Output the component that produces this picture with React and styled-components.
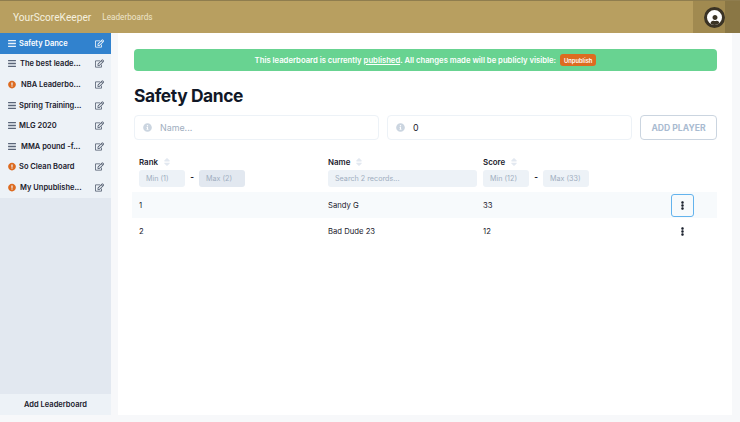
import React from 'react'
import styled, { createGlobalStyle } from 'styled-components'
import { FaBars, FaExclamationCircle, FaInfoCircle, FaEllipsisV, FaRegEdit, FaUser, FaSortUp, FaSortDown } from 'react-icons/fa'

const GlobalStyle = createGlobalStyle`
    html, body { margin: 0; padding: 0; height: 100%; }
    body { font-family: Inter, "Liberation Sans", sans-serif; color: #1a202c; background: #f7f8fa; }
    * { box-sizing: border-box; }
`
const Page = styled.div`
    width: 740px;
    height: 422px;
    display: flex;
    flex-direction: column;
    overflow: hidden;
`
const Header = styled.header`
    height: 33px;
    flex: none;
    display: flex;
    align-items: center;
    background: #b89f60;
    border-top: 1px solid #8f7d4e;
    padding-left: 13px;
`
const Brand = styled.span`
    font-family: Roboto, sans-serif;
    font-size: 10.2px;
    color: #f5f0df;
`
const NavLink = styled.span`
    font-family: Roboto, sans-serif;
    font-size: 8.2px;
    color: #eee6cd;
    margin-left: 11px;
`
const HeaderEnd = styled.div`
    margin-left: auto;
    height: 100%;
    display: flex;
`
const AvatarBox = styled.div`
    width: 32px;
    display: flex;
    align-items: center;
    justify-content: flex-end;
    background: #a18a50;
`
const Avatar = styled.div`
    width: 21px;
    height: 21px;
    border-radius: 50%;
    background: #fff;
    border: 3px solid #3a3325;
    display: flex;
    align-items: flex-end;
    justify-content: center;
    color: #3a3325;
    font-size: 10px;
    overflow: hidden;
`
const HeaderGutter = styled.div`
    width: 15px;
    background: #8a7745;
`
const Body = styled.div`
    flex: 1;
    display: flex;
    min-height: 0;
    padding-bottom: 7px;
`
const Sidebar = styled.aside`
    width: 111px;
    flex: none;
    display: flex;
    flex-direction: column;
    background: #e2e8f0;
`
const SideList = styled.div`
    flex: 1;
`
const SideItem = styled.div`
    height: 20.6px;
    display: flex;
    align-items: center;
    padding: 0 7px 0 8px;
    background: ${p => (p.$active ? '#3182ce' : '#edf2f7')};
    color: ${p => (p.$active ? '#fff' : '#1a202c')};
    font-size: 7.5px;
    font-weight: 600;
    white-space: nowrap;
`
const SideMark = styled.span`
    width: 8px;
    flex: none;
    display: flex;
    align-items: center;
    justify-content: center;
    font-size: 9px;
    color: ${p => (p.$warn ? '#dd6b20' : p.$active ? '#e6f0fa' : '#5a6578')};
`
const SideName = styled.span`
    flex: 1;
    margin-left: ${p => p.$indent}px;
`
const EditIcon = styled(FaRegEdit)`
    font-size: 9px;
    flex: none;
    color: ${p => (p.$active ? '#fff' : '#4a5568')};
`
const AddBoard = styled.div`
    height: 21px;
    flex: none;
    display: flex;
    align-items: center;
    justify-content: center;
    background: #edf2f7;
    font-size: 7.5px;
    font-weight: 600;
`
const Main = styled.main`
    flex: 1;
    margin: 0 8px 0 7px;
    padding: 16px 15px 0 16px;
    background: #fff;
`
const Banner = styled.div`
    height: 22px;
    display: flex;
    align-items: center;
    justify-content: center;
    background: #68d391;
    border-radius: 4px;
    color: #fff;
    font-size: 7.7px;
    font-weight: 600;
    white-space: pre;
`
const Underlined = styled.span`
    text-decoration: underline;
`
const Unpublish = styled.span`
    margin-left: 4px;
    height: 12px;
    padding: 0 4px;
    display: flex;
    align-items: center;
    background: #dd6b20;
    border-radius: 3px;
    font-size: 5.8px;
`
const Title = styled.h1`
    margin: 15px 0 9px;
    height: 20px;
    line-height: 20px;
    font-size: 17.4px;
    font-weight: 700;
    letter-spacing: -0.4px;
    color: #111827;
`
const FormRow = styled.div`
    display: flex;
    gap: 8px;
`
const Field = styled.div`
    width: 245px;
    height: 25px;
    display: flex;
    align-items: center;
    padding-left: 8px;
    border: 1px solid #edf2f7;
    border-radius: 4px;
    font-size: 8.9px;
    color: ${p => (p.$filled ? '#1a202c' : '#a0aec0')};
`
const FieldIcon = styled(FaInfoCircle)`
    font-size: 9px;
    color: #cbd5e0;
    margin-right: 8px;
`
const AddPlayer = styled.div`
    width: 77px;
    height: 25px;
    display: flex;
    align-items: center;
    justify-content: center;
    border: 1px solid #cbd5e0;
    border-radius: 4px;
    font-size: 8.6px;
    font-weight: 700;
    color: #a9bbd1;
`
const Table = styled.div`
    margin-top: 15px;
`
const HeadRow = styled.div`
    display: grid;
    grid-template-columns: 189px 155px 1fr;
    padding: 0 5px;
    height: 37px;
`
const HeadCell = styled.div`
    display: flex;
    flex-direction: column;
    gap: 1px;
`
const HeadLabel = styled.div`
    height: 14px;
    display: flex;
    align-items: center;
    font-size: 7.9px;
    font-weight: 600;
`
const SortIcons = styled.span`
    position: relative;
    display: inline-block;
    width: 8px;
    height: 12px;
    margin-left: 4px;
    color: #e2e8f0;
    font-size: 10px;
    svg { position: absolute; left: 0; top: 1px; }
`
const Filters = styled.div`
    display: flex;
    align-items: center;
`
const FilterBox = styled.div`
    width: ${p => p.$w}px;
    height: 17px;
    display: flex;
    align-items: center;
    padding-left: 7px;
    border-radius: 3px;
    background: ${p => (p.$dark ? '#e2e8f0' : '#edf2f7')};
    font-size: 7.2px;
    color: #a0aec0;
`
const Dash = styled.span`
    width: 14px;
    text-align: center;
    font-size: 8px;
    font-weight: 700;
    position: relative;
    top: -2px;
`
const Row = styled.div`
    display: grid;
    grid-template-columns: 189px 155px 188px 1fr;
    align-items: center;
    height: 26px;
    margin-left: -2px;
    padding: 0 7px;
    background: ${p => (p.$shade ? '#f7fafc' : '#fff')};
    font-size: 7.7px;
    color: #1a202c;
`
const MenuButton = styled.div`
    width: 23px;
    height: 23px;
    display: flex;
    align-items: center;
    justify-content: center;
    border-radius: 3px;
    border: ${p => (p.$focus ? '1.5px solid #63b3ed' : '1.5px solid transparent')};
    color: #1a202c;
    font-size: 9px;
`

const boards = [
    { name: 'Safety Dance', active: true, indent: 3 },
    { name: 'The best leade...', indent: 4 },
    { name: 'NBA Leaderbo...', warn: true, indent: 5 },
    { name: 'Spring Training...', indent: 3 },
    { name: 'MLG 2020', indent: 3 },
    { name: 'MMA pound -f...', indent: 5 },
    { name: 'So Clean Board', warn: true, indent: 3 },
    { name: 'My Unpublishe...', warn: true, indent: 4 },
]

const players = [
    { rank: 1, name: 'Sandy G', score: 33 },
    { rank: 2, name: 'Bad Dude 23', score: 12 },
]

const Sort = () => (
    <SortIcons>
        <FaSortUp />
        <FaSortDown />
    </SortIcons>
)

function App() {
    return (
        <Page>
            <GlobalStyle />
            <Header>
                <Brand>YourScoreKeeper</Brand>
                <NavLink>Leaderboards</NavLink>
                <HeaderEnd>
                    <AvatarBox>
                        <Avatar><FaUser /></Avatar>
                    </AvatarBox>
                    <HeaderGutter />
                </HeaderEnd>
            </Header>
            <Body>
                <Sidebar>
                    <SideList>
                        {boards.map(board => (
                            <SideItem key={board.name} $active={board.active}>
                                <SideMark $warn={board.warn} $active={board.active}>
                                    {board.warn ? <FaExclamationCircle /> : <FaBars />}
                                </SideMark>
                                <SideName $indent={board.indent}>{board.name}</SideName>
                                <EditIcon $active={board.active} />
                            </SideItem>
                        ))}
                    </SideList>
                    <AddBoard>Add Leaderboard</AddBoard>
                </Sidebar>
                <Main>
                    <Banner>
                        This leaderboard is currently <Underlined>published</Underlined>. All changes made will be publicly visible:
                        <Unpublish>Unpublish</Unpublish>
                    </Banner>
                    <Title>Safety Dance</Title>
                    <FormRow>
                        <Field><FieldIcon />Name...</Field>
                        <Field $filled><FieldIcon />0</Field>
                        <AddPlayer>ADD PLAYER</AddPlayer>
                    </FormRow>
                    <Table>
                        <HeadRow>
                            <HeadCell>
                                <HeadLabel>Rank<Sort /></HeadLabel>
                                <Filters>
                                    <FilterBox $w={46}>Min (1)</FilterBox>
                                    <Dash>-</Dash>
                                    <FilterBox $w={46} $dark>Max (2)</FilterBox>
                                </Filters>
                            </HeadCell>
                            <HeadCell>
                                <HeadLabel>Name<Sort /></HeadLabel>
                                <Filters>
                                    <FilterBox $w={149}>Search 2 records...</FilterBox>
                                </Filters>
                            </HeadCell>
                            <HeadCell>
                                <HeadLabel>Score<Sort /></HeadLabel>
                                <Filters>
                                    <FilterBox $w={46}>Min (12)</FilterBox>
                                    <Dash>-</Dash>
                                    <FilterBox $w={46}>Max (33)</FilterBox>
                                </Filters>
                            </HeadCell>
                        </HeadRow>
                        {players.map((player, i) => (
                            <Row key={player.rank} $shade={i === 0}>
                                <span>{player.rank}</span>
                                <span>{player.name}</span>
                                <span>{player.score}</span>
                                <MenuButton $focus={i === 0}><FaEllipsisV /></MenuButton>
                            </Row>
                        ))}
                    </Table>
                </Main>
            </Body>
        </Page>
    )
}

export default App
